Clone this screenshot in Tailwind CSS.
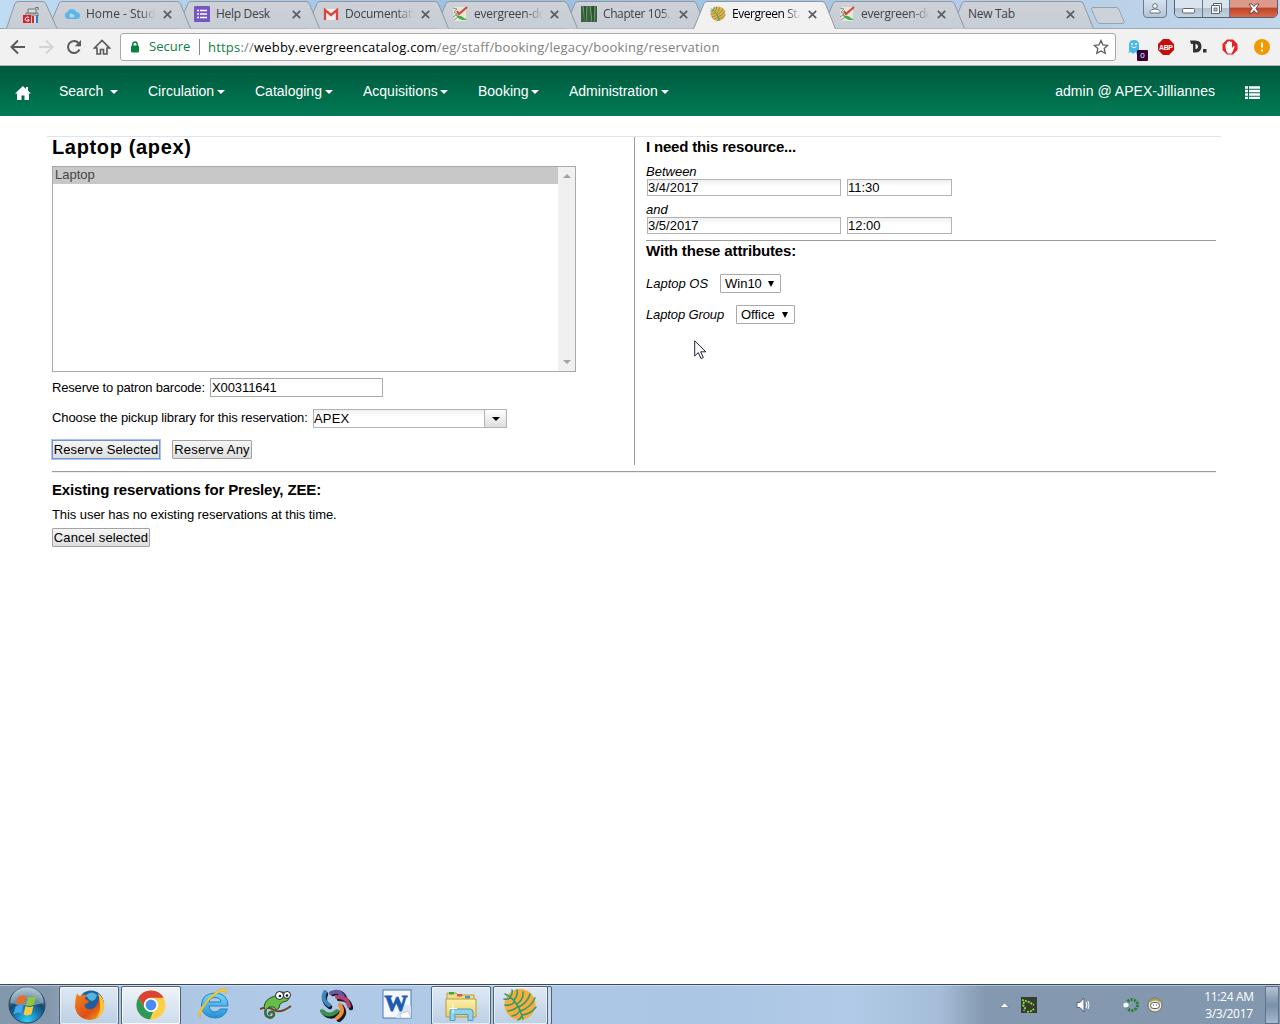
<!DOCTYPE html>
<html lang="en">
<head>
<meta charset="utf-8">
<title>Evergreen Staff Client</title>
<script src="https://cdn.jsdelivr.net/npm/@tailwindcss/browser@4"></script>
</head>
<body class="w-[1280px] h-[1024px] overflow-hidden bg-white flex flex-col font-['Liberation_Sans',Arial,sans-serif] text-[13px] text-black">
<svg width="0" height="0" class="absolute">
  <defs>
    <linearGradient id="tabg" x1="0" y1="0" x2="0" y2="1"><stop offset="0" stop-color="#ced2d7"/><stop offset="1" stop-color="#c7cdd6"/></linearGradient>
    <radialGradient id="orb" cx=".5" cy=".95" r=".9"><stop offset="0" stop-color="#2fd0f5"/><stop offset=".35" stop-color="#1787bd"/><stop offset=".65" stop-color="#15486f"/><stop offset="1" stop-color="#9ab6c8"/></radialGradient>
    <linearGradient id="ie" x1="0" y1="0" x2="0" y2="1"><stop offset="0" stop-color="#7ed6f8"/><stop offset="1" stop-color="#2391d6"/></linearGradient>
    <linearGradient id="fold" x1="0" y1="0" x2="0" y2="1"><stop offset="0" stop-color="#fdf0a8"/><stop offset="1" stop-color="#e9cf6a"/></linearGradient>
    <linearGradient id="fox" x1="0" y1="0" x2="1" y2="1"><stop offset="0" stop-color="#f08a1c"/><stop offset=".6" stop-color="#df4d14"/><stop offset="1" stop-color="#f7b51c"/></linearGradient>
  </defs>
  <symbol id="tab" viewBox="0 0 143 29"><path d="M.5 28.5L11 3.5Q12 1.5 14 1.5H129Q131.500 1.500 132.500 4L142.500 28.500Z" fill="url(#tabg)"/><path d="M.5 28.5L11 3.500Q12 1.500 14 1.500H129Q131.500 1.500 132.500 4L142.500 28.500" fill="none" stroke="#8f98a3"/></symbol>
  <symbol id="x" viewBox="0 0 9 9"><path d="M.8.8l7.400 7.400M8.200.8L.8 8.200" stroke="#5a5e63" stroke-width="1.700"/></symbol>
  <symbol id="leaf" viewBox="0 0 34 34"><circle cx="17" cy="16.500" r="15.500" fill="#f6ad3c"/><g fill="none" stroke="#2b9a72" stroke-width="1.500" stroke-linecap="round"><path d="M2 6Q15 12 20 31"/><path d="M7 9Q10 6 9 2M11 12Q15 8 14 2M14 16Q21 11 20 4M16 19Q25 14 27 6M18 23Q28 19 32 10M19 27Q28 26 33 19"/><path d="M8 9.500Q5 12 1 11M12 14Q8 18 2 17M15 18Q12 22 5 23M17 22Q15 27 9 28M19 27Q18 31 15 32"/></g></symbol>
  <symbol id="log" viewBox="0 0 16 16"><path d="M1 1h13v14H2z" fill="#e8e6dc"/><path d="M1 2l4 1-3 3 3 2-4 3" stroke="#8b9084" fill="none"/><path d="M15 1L7 8l-2-3" stroke="#cc4b38" stroke-width="2.200" fill="none"/><path d="M3 8l4 2 2 0 6 4-5 0-4-2z" fill="#3fae45"/><path d="M2 14l4-3" stroke="#998899"/></symbol>
  <symbol id="person" viewBox="0 0 12 11"><circle cx="6" cy="3" r="2.300" fill="#fff" stroke="#66707c"/><path d="M1 10V8.500Q2 6 6 6t5 2.500V10z" fill="#fff" stroke="#66707c"/></symbol>
</svg>

<!-- window frame with tab strip -->
<header class="relative h-[29px] shrink-0 border-b border-[#a2a5a9] bg-linear-to-r from-[#bfdcf3] via-[#99bde2] via-40% to-[#c3d7ea] font-['Open_Sans','Noto_Sans',sans-serif] text-[12px] leading-[28px] text-[#3f4246]">
  <div class="flex h-[29px] pl-[6px]">
    <div class="relative z-10 w-[52px] h-[29px] shrink-0">
      <svg class="absolute inset-0" width="52" height="29"><path d="M.5 28.500L9 3.500Q10 1.500 12 1.500H37Q39 1.500 40 4L51 28.500" fill="url(#tabg)" stroke="#8f98a3"/></svg>
      <svg class="relative ml-[17px] mt-[7px]" width="17" height="16"><path d="M5 2h8v5H5zM3 6h12v3H3z" fill="#d9d9d9" stroke="#777"/><path d="M12 1l3-1v3" stroke="#666" fill="none"/><rect x="0" y="8" width="8" height="8" fill="#d8202a"/><path d="M6 10.500Q4 9 2.500 11T4 14h2v-1.500H4.500" stroke="#fff" fill="none"/><path d="M9 9h2v7H9z" fill="#b33"/><path d="M11 9h2v7h-2z" fill="#ddd"/><path d="M13 8h2v8h-2z" fill="#277fc0"/></svg>
    </div>
    <div class="relative z-9 -ml-[10px] w-[143px] h-[29px] shrink-0 flex items-center pl-[16px] pb-px">
      <svg class="absolute left-0 top-0" width="143" height="29"><use href="#tab"/></svg>
      <svg class="relative shrink-0" width="16" height="16"><path d="M4 13a3.500 3.500 0 0 1-.5-6.900A4.800 4.800 0 0 1 12.500 6 3.500 3.500 0 0 1 12.500 13z" fill="#62b5e8"/><path d="M5 7h3l1 1h2v4H5z" fill="#a9d8f3" stroke="#4a9fd5" stroke-width=".7"/></svg>
      <span class="relative ml-[6px] w-[69px] h-[28px] whitespace-nowrap mask-r-from-80%">Home - Stud</span>
      <svg class="relative ml-[8px]" width="9" height="9"><use href="#x"/></svg>
    </div>
    <div class="relative z-8 -ml-[14px] w-[143px] h-[29px] shrink-0 flex items-center pl-[17px] pb-px">
      <svg class="absolute left-0 top-0" width="143" height="29"><use href="#tab"/></svg>
      <svg class="relative shrink-0" width="16" height="16"><rect width="16" height="16" rx="1" fill="#7657c2"/><path d="M3 4.500h2M3 8h2M3 11.500h2M6 4.500h7M6 8h7M6 11.500h7" stroke="#fff" stroke-width="1.700"/></svg>
      <span class="relative ml-[6px] w-[69px] h-[28px] whitespace-nowrap tracking-[-.3px]">Help Desk</span>
      <svg class="relative ml-[7px]" width="9" height="9"><use href="#x"/></svg>
    </div>
    <div class="relative z-7 -ml-[14px] w-[143px] h-[29px] shrink-0 flex items-center pl-[17px] pb-px">
      <svg class="absolute left-0 top-0" width="143" height="29"><use href="#tab"/></svg>
      <svg class="relative shrink-0" width="16" height="16"><path d="M1 3h14v11H1z" fill="#eee"/><path d="M2 14V4l6 5 6-5v10" fill="none" stroke="#d9483b" stroke-width="2.300"/></svg>
      <span class="relative ml-[6px] w-[69px] h-[28px] whitespace-nowrap tracking-[-.25px] mask-r-from-75%">Documentati</span>
      <svg class="relative ml-[7px]" width="9" height="9"><use href="#x"/></svg>
    </div>
    <div class="relative z-6 -ml-[14px] w-[143px] h-[29px] shrink-0 flex items-center pl-[17px] pb-px">
      <svg class="absolute left-0 top-0" width="143" height="29"><use href="#tab"/></svg>
      <svg class="relative shrink-0" width="16" height="16"><use href="#log"/></svg>
      <span class="relative ml-[6px] w-[69px] h-[28px] whitespace-nowrap tracking-[-.25px] mask-r-from-75%">evergreen-dc</span>
      <svg class="relative ml-[7px]" width="9" height="9"><use href="#x"/></svg>
    </div>
    <div class="relative z-5 -ml-[14px] w-[143px] h-[29px] shrink-0 flex items-center pl-[17px] pb-px">
      <svg class="absolute left-0 top-0" width="143" height="29"><use href="#tab"/></svg>
      <svg class="relative shrink-0" width="16" height="16"><rect width="16" height="16" fill="#39633f"/><path d="M2 0l2 16M6 0l-1 16M9 0l2 16M14 0l-1 16" stroke="#6f9d70"/><path d="M4 0v16M12 0v16" stroke="#1e4227"/></svg>
      <span class="relative ml-[6px] w-[69px] h-[28px] whitespace-nowrap tracking-[-.4px] mask-r-from-85%">Chapter 105.</span>
      <svg class="relative ml-[7px]" width="9" height="9"><use href="#x"/></svg>
    </div>
    <div class="relative z-20 -ml-[14px] w-[143px] h-[29px] shrink-0 flex items-center pl-[17px] pb-px text-black">
      <svg class="absolute left-0 top-0" width="143" height="29"><path d="M.5 29L11 3.500Q12 1.500 14 1.500H129Q131.500 1.500 132.500 4L142.500 29" fill="#f2f1f2" stroke="#8f98a3"/></svg>
      <svg class="relative shrink-0" width="16" height="16"><use href="#leaf"/></svg>
      <span class="relative ml-[6px] w-[69px] h-[28px] whitespace-nowrap tracking-[-.45px] mask-r-from-75%">Evergreen Sta</span>
      <svg class="relative ml-[7px]" width="9" height="9"><use href="#x"/></svg>
    </div>
    <div class="relative z-3 -ml-[14px] w-[143px] h-[29px] shrink-0 flex items-center pl-[17px] pb-px">
      <svg class="absolute left-0 top-0" width="143" height="29"><use href="#tab"/></svg>
      <svg class="relative shrink-0" width="16" height="16"><use href="#log"/></svg>
      <span class="relative ml-[6px] w-[69px] h-[28px] whitespace-nowrap tracking-[-.25px] mask-r-from-75%">evergreen-dc</span>
      <svg class="relative ml-[7px]" width="9" height="9"><use href="#x"/></svg>
    </div>
    <div class="relative z-2 -ml-[14px] w-[143px] h-[29px] shrink-0 flex items-center pl-[17px] pb-px">
      <svg class="absolute left-0 top-0" width="143" height="29"><use href="#tab"/></svg>
      <span class="relative w-[91px] h-[28px] whitespace-nowrap tracking-[-.3px]">New Tab</span>
      <svg class="relative ml-[7px]" width="9" height="9"><use href="#x"/></svg>
    </div>
    <svg class="-ml-[4px] mt-[6px] shrink-0" width="36" height="19"><path d="M3 1.500H26Q28 1.500 29 3.500L34 15.500Q34.500 17.500 33 17.500H10Q8 17.500 7 15.500L1.500 3.500Q1 1.500 3 1.500Z" fill="#cdd2d9" stroke="#98a2ad"/></svg>
    <div class="ml-[17px] mt-[-1px] w-[24px] h-[19px] shrink-0 rounded-b-[4px] border border-[#6d7b8a] bg-linear-to-b from-[#d5e2ee] to-[#b3c6d9] flex justify-center pt-[3px]"><svg width="12" height="11"><use href="#person"/></svg></div>
    <div class="ml-[7px] mt-[-1px] w-[104px] h-[19px] shrink-0 flex rounded-b-[5px] border border-[#56616e] overflow-hidden">
      <div class="w-[28px] border-r border-[#6b7784] bg-linear-to-b from-[#d9e4ee] from-45% via-[#b1c2d2] via-50% to-[#c3d3e2] flex justify-center"><svg class="mt-[8px]" width="13" height="6"><rect x=".5" y=".5" width="12" height="4.500" rx="1" fill="#fff" stroke="#5b6470"/></svg></div>
      <div class="w-[27px] border-r border-[#6b7784] bg-linear-to-b from-[#d9e4ee] from-45% via-[#b1c2d2] via-50% to-[#c3d3e2] flex justify-center"><svg class="mt-[3px]" width="13" height="12"><path d="M3.500.5h8v8h-8z" fill="#fff" stroke="#5b6470"/><path d="M1.500 2.500h8v8h-8z" fill="#fff" stroke="#5b6470"/><rect x="4" y="5" width="3" height="3" fill="#b1c2d2" stroke="#5b6470" stroke-width=".8"/></svg></div>
      <div class="flex-1 bg-linear-to-b from-[#dc9a8c] from-40% via-[#c14328] via-50% to-[#d8694c] flex justify-center"><svg class="mt-[3px]" width="14" height="11"><path d="M2 1h3l2 2.500L9 1h3L9 5.500 12 10H9L7 7.500 5 10H2L5 5.500z" fill="#fff" stroke="#5b3a3c" stroke-width=".9"/></svg></div>
    </div>
  </div>
</header>

<!-- address bar -->
<div class="h-[37px] shrink-0 bg-[#f2f1f2] border-b border-[#b6b4b6] flex items-center pl-[10px] font-['Open_Sans','Noto_Sans',sans-serif] text-[13px]">
  <svg width="16" height="16" viewBox="0 0 16 16"><path d="M15 8H2M8 1.500L1.500 8 8 14.500" fill="none" stroke="#5a5a5a" stroke-width="2"/></svg>
  <svg class="ml-[12px]" width="16" height="16" viewBox="0 0 16 16"><path d="M1 8H14M8 1.500L14.500 8 8 14.500" fill="none" stroke="#d5d4d5" stroke-width="2"/></svg>
  <svg class="ml-[12px]" width="16" height="16" viewBox="0 0 16 16"><path d="M13.500 10.500A6 6 0 1 1 12.500 4" fill="none" stroke="#5a5a5a" stroke-width="2"/><path d="M15 1v6.200H8.800z" fill="#5a5a5a"/></svg>
  <svg class="ml-[11px]" width="18" height="16" viewBox="0 0 18 16"><path d="M1.500 9L9 1.500 16.500 9H14v6h-3.500v-4.500h-3V15H4V9z" fill="none" stroke="#5a5a5a" stroke-width="1.600"/></svg>
  <div class="ml-[9px] w-[996px] h-[28px] rounded-[3px] border border-[#a9a8a9] bg-white flex items-center pl-[9px]">
    <svg width="10" height="12"><rect x="1" y="4.500" width="8" height="7" rx="1" fill="#0b8043"/><path d="M2.800 5V3.200a2.200 2.200 0 0 1 4.400 0V5" fill="none" stroke="#0b8043" stroke-width="1.400"/></svg>
    <span class="ml-[9px] w-[41px] text-[#0b8043] whitespace-nowrap">Secure</span>
    <span class="ml-[9px] w-px h-[16px] bg-[#8a8a8a]"></span>
    <span class="ml-[8px] w-[883px] pt-px whitespace-nowrap tracking-[.205px] text-[#808080]"><span class="text-[#0b8043]">https</span>://<span class="text-black">webby.evergreencatalog.com</span>/eg/staff/booking/legacy/booking/reservation</span>
    <svg class="ml-[2px] shrink-0" width="16" height="16" viewBox="0 0 16 16"><path d="M8 1.500l2 4.400 4.700.5-3.500 3.200 1 4.700L8 12l-4.200 2.300 1-4.700L1.300 6.400 6 5.900z" fill="none" stroke="#5a5a5a" stroke-width="1.300"/></svg>
  </div>
  <div class="relative ml-[11px] w-[31px] h-[28px]">
    <svg class="mt-[6px]" width="14" height="16"><path d="M2 6Q2 1 7 1t5 5v7l1 1-3 1-2-2-2 2-2-2-3 1q2-2 1-4z" fill="#48b8e8"/><circle cx="5" cy="5" r="1" fill="#fff"/><circle cx="9" cy="5" r="1" fill="#fff"/><path d="M4.500 7.500Q7 10 9.500 7.500" fill="none" stroke="#fff"/></svg>
    <span class="absolute left-[10px] top-[17px] w-[11px] h-[11px] rounded-[1px] bg-[#330033] text-white text-[8px] leading-[11px] text-center font-['Liberation_Sans']">0</span>
  </div>
  <div class="w-[32px]"><svg width="16" height="16"><path d="M5 0h6l5 5v6l-5 5H5L0 11V5z" fill="#c70d0d"/><text x="8" y="10.500" text-anchor="middle" font-size="7" font-weight="700" font-family="Liberation Sans" fill="#fff" textLength="14">ABP</text></svg></div>
  <div class="w-[32px]"><svg width="17" height="16"><path d="M0 1.500h5q6.500 0 6.500 6t-6.500 6H3V5H1z" fill="#333"/><path d="M5.500 5v5q2.500 0 2.500-2.500T5.500 5" fill="#f2f1f2"/><rect x="13" y="10" width="3.500" height="3.500" fill="#333"/></svg></div>
  <div class="w-[32px]"><svg width="16" height="16"><path d="M5 .5h6L15.500 5v6L11 15.500H5L.5 11V5z" fill="#e52325"/><path d="M3.500 8V5q.8-1 1.500 0V3q.8-1 1.600 0v-.5q.9-1 1.700 0V3q.9-.8 1.600 0V9l1.800-2q1.300 0 .8 1L10.500 13l-1 1.500H6Q3.500 12 3.500 8z" fill="#fff"/></svg></div>
  <svg width="16" height="16"><circle cx="8" cy="8" r="8" fill="#f29900"/><path d="M8 3.500v5M8 10.500v2" stroke="#fff" stroke-width="2"/></svg>
</div>

<!-- staff client navigation -->
<nav class="h-[50px] shrink-0 bg-linear-to-b from-[#00593d] to-[#007a54] flex items-center pl-[15px] text-[14px] text-white">
  <svg class="mt-[3px]" width="16" height="14"><path d="M8 0L0 7.500h2V14h4.500V9.500h3V14H14V7.500h2L13 4.700V1h-2v2z" fill="#fff"/></svg>
  <span class="ml-[28px] w-[89px] flex items-center">Search<svg class="ml-[7px] mt-px" width="8" height="4"><path d="M0 0h8L4 4z" fill="#fff"/></svg></span>
  <span class="w-[107px] flex items-center">Circulation<svg class="ml-[3px] mt-px" width="8" height="4"><path d="M0 0h8L4 4z" fill="#fff"/></svg></span>
  <span class="w-[108px] flex items-center">Cataloging<svg class="ml-[3px] mt-px" width="8" height="4"><path d="M0 0h8L4 4z" fill="#fff"/></svg></span>
  <span class="w-[115px] flex items-center">Acquisitions<svg class="ml-[2px] mt-px" width="8" height="4"><path d="M0 0h8L4 4z" fill="#fff"/></svg></span>
  <span class="w-[91px] flex items-center">Booking<svg class="ml-[2px] mt-px" width="8" height="4"><path d="M0 0h8L4 4z" fill="#fff"/></svg></span>
  <span class="flex items-center">Administration<svg class="ml-[3px] mt-px" width="8" height="4"><path d="M0 0h8L4 4z" fill="#fff"/></svg></span>
  <span class="ml-auto whitespace-nowrap tracking-[.04px]">admin @ APEX-Jilliannes</span>
  <svg class="ml-[30px] mr-[20px] mt-[3px]" width="15" height="13"><path d="M0 1.500h3M0 5h3M0 8.500h3M0 12h3M4 1.500h11M4 5h11M4 8.500h11M4 12h11" stroke="#fff" stroke-width="2.500"/></svg>
</nav>

<!-- booking page -->
<main class="relative flex-1 pt-[20px] pl-[47px]">
  <div class="w-[1174px] border-t border-[#dbe5f1] pl-[5px]">
    <div class="flex h-[328px]">
      <section class="w-[583px] shrink-0 border-r border-[#9c9c9c]">
        <h1 class="h-[29px] text-[20px] leading-[20px] font-bold whitespace-nowrap tracking-[.65px]">Laptop (apex)</h1>
        <div class="w-[524px] h-[206px] border border-[#a9a9a9] flex">
          <div class="flex-1"><div class="h-[17px] bg-[#c8c8c8] pl-[2px] leading-[16px] text-[#444]">Laptop</div></div>
          <div class="w-[17px] bg-[#f0f0f0] flex flex-col items-center justify-between py-[7px]">
            <svg width="8" height="4"><path d="M0 4L4 0l4 4z" fill="#a3a3a3"/></svg>
            <svg width="8" height="4"><path d="M0 0h8L4 4z" fill="#a3a3a3"/></svg>
          </div>
        </div>
        <div class="mt-[6px] flex h-[19px] items-center">
          <span class="w-[158px] whitespace-nowrap tracking-[-.18px]">Reserve to patron barcode:</span>
          <div class="w-[173px] h-[19px] border border-[#a9a9a9] pl-px leading-[17px] tracking-[-.1px]">X00311641</div>
        </div>
        <div class="mt-[12px] flex h-[19px]">
          <span class="w-[261px] leading-[18px] whitespace-nowrap tracking-[-.11px]">Choose the pickup library for this reservation:</span>
          <div class="w-[194px] h-[19px] border border-[#b3b3b3] flex leading-[18px] bg-linear-to-b from-[#eeeeee] to-white to-40%">
            <span class="flex-1 tracking-[.2px]">APEX</span>
            <span class="w-[22px] border-l border-[#b3b3b3] bg-linear-to-b from-white to-[#dddddd] flex items-center justify-center"><svg class="mt-px" width="8" height="4"><path d="M0 0h8L4 4z"/></svg></span>
          </div>
        </div>
        <div class="mt-[12px] flex gap-[12px]">
          <button class="w-[108px] h-[19px] border border-[#6d96d8] outline outline-[#a8c3ee] bg-linear-to-b from-[#f6f6f6] to-[#dddddd] leading-[17px] whitespace-nowrap tracking-[.12px]">Reserve Selected</button>
          <button class="w-[80px] h-[19px] border border-[#a3a3a3] rounded-[1px] bg-linear-to-b from-[#f6f6f6] to-[#dddddd] leading-[17px] whitespace-nowrap tracking-[.15px]">Reserve Any</button>
        </div>
      </section>
      <section class="pl-[11px] w-[581px]">
        <h2 class="h-[26px] text-[15px] leading-[20px] font-bold tracking-[-.18px]">I need this resource...</h2>
        <p class="h-[16px] leading-[17px] italic">Between</p>
        <div class="flex gap-[6px] pl-px leading-[15px]">
          <div class="w-[194px] h-[17px] border border-[#b3b3b3] bg-linear-to-b from-[#eeeeee] to-white to-40%">3/4/2017</div>
          <div class="w-[105px] h-[17px] border border-[#b3b3b3] bg-linear-to-b from-[#eeeeee] to-white to-40%">11:30</div>
        </div>
        <p class="mt-[5px] h-[16px] leading-[17px] italic">and</p>
        <div class="flex gap-[6px] pl-px leading-[15px]">
          <div class="w-[194px] h-[17px] border border-[#b3b3b3] bg-linear-to-b from-[#eeeeee] to-white to-40%">3/5/2017</div>
          <div class="w-[105px] h-[17px] border border-[#b3b3b3] bg-linear-to-b from-[#eeeeee] to-white to-40%">12:00</div>
        </div>
        <div class="mt-[6px] border-t border-[#9c9c9c]"></div>
        <h2 class="h-[33px] text-[15px] leading-[20px] font-bold tracking-[-.14px]">With these attributes:</h2>
        <div class="flex h-[19px] leading-[19px]"><span class="w-[74px] italic whitespace-nowrap">Laptop OS</span><div class="w-[61px] border border-[#a9a9a9] rounded-[1px] pl-[4px] leading-[17px] flex items-center">Win10<svg class="ml-[6px]" width="6" height="6"><path d="M0 0h6L3 6z"/></svg></div></div>
        <div class="mt-[12px] flex h-[19px] leading-[19px]"><span class="w-[90px] italic whitespace-nowrap tracking-[-.12px]">Laptop Group</span><div class="w-[59px] border border-[#a9a9a9] rounded-[1px] pl-[4px] leading-[17px] flex items-center">Office<svg class="ml-[7px]" width="6" height="6"><path d="M0 0h6L3 6z"/></svg></div></div>
      </section>
    </div>
    <div class="mt-[6px] w-[1164px] h-[2px] border-t border-[#9c9c9c] bg-[#eeeeee]"></div>
    <h2 class="mt-[7px] h-[25px] text-[15px] leading-[20px] font-bold tracking-[-.15px]">Existing reservations for Presley, ZEE:</h2>
    <p class="h-[23px] leading-[20px] tracking-[-.07px]">This user has no existing reservations at this time.</p>
    <button class="w-[98px] h-[19px] border border-[#a3a3a3] rounded-[1px] bg-linear-to-b from-[#f6f6f6] to-[#dddddd] leading-[17px] whitespace-nowrap block tracking-[.12px]">Cancel selected</button>
  </div>
  <!-- mouse pointer -->
  <svg class="absolute left-[694px] top-[224px]" width="13" height="20"><path d="M.7.800V16l3.600-3.400L7 18.500l2.300-1-2.600-5.700H11.800z" fill="#fff" stroke="#22223a"/></svg>
</main>

<!-- taskbar -->
<footer class="h-[40px] shrink-0 border-t border-[#3c4a58] bg-[linear-gradient(90deg,#8498ad_0px,#8498ad_50px,#a9c4e2_110px,#b1cae7_300px,#aac6e4_700px,#b1cae7_850px,#a5bdd8_940px,#8499b0_985px,#8398af_1280px)] text-white">
  <div class="flex items-center h-[39px] border-t border-white/40">
    <svg class="ml-[8px]" width="38" height="38"><circle cx="19" cy="19" r="18" fill="url(#orb)" stroke="#2a4258"/><path d="M2.500 17A16.500 16.500 0 0 1 35.500 17Q19 22 2.500 17" fill="#c8dbe5" opacity=".45"/><path d="M10 11q4-3 8-1l-2 8q-4-2-8 1z" fill="#ee6a2a"/><path d="M20 10.500q4 2 8-.5l-2 8.500q-4 2.500-8 .5z" fill="#8fc73e"/><path d="M7.500 20.500q4-3 8-1l-2 8q-4-2-8 1z" fill="#48a4e6"/><path d="M17.500 20q4 2 8 0l-2 8q-4 2.500-8 .5z" fill="#fbca3c"/></svg>
    <div class="ml-[13px] w-[60px] h-[39px] rounded-[2px] border border-[#4f6276] bg-linear-to-b from-[#dfe9f4] to-[#bccfe4] shadow-[inset_0_0_0_1px_rgba(255,255,255,.6)] flex items-center justify-center">
      <svg width="31" height="31"><circle cx="17" cy="13" r="12.500" fill="#1e5f9f"/><path d="M12 5q6-5 11 0-1 5-5 6-4-1-6-6z" fill="#55b4dd"/><path d="M3 3q1 3 3 3 3-2 7-1-2 2-2 4l4 2q-1 3-4 3-1 4 3 5 5 1 8-3 5-6 2-13 7 6 6 14-2 12-14 13-13-1-15-13Q1 9 3 3z" fill="url(#fox)"/><path d="M24 3q7 7 6 14-1 8-8 11 5-6 4-13 0-6-2-12z" fill="#fbc62d"/></svg>
    </div>
    <div class="ml-[2px] w-[60px] h-[39px] rounded-[2px] border border-[#4f6276] bg-linear-to-b from-[#eef3f9] to-[#ccdced] shadow-[inset_0_0_0_1px_rgba(255,255,255,.8)] flex items-center justify-center">
      <svg width="30" height="30" viewBox="0 0 30 30"><circle cx="15" cy="15" r="14.500" fill="#fdcf47"/><path d="M2.400 7.700A14.500 14.500 0 0 1 27.600 7.700H15A7 7 0 0 0 9 18.500z" fill="#d94435"/><path d="M2.400 7.700L9 18.500Q12 22 17 21.800L14 29.500A14.500 14.500 0 0 1 2.400 7.700z" fill="#2c9a57"/><circle cx="15" cy="15" r="7" fill="#fff"/><circle cx="15" cy="15" r="5.400" fill="#4a8af4"/></svg>
    </div>
    <svg class="ml-[16px] -mt-[2px]" width="34" height="34"><path d="M31 19H12q1 6 6 6 3.500 0 5-3h7.500q-3 9-12.500 9Q4.500 30 4.500 18 5 6.500 18 6q13 .5 13 13zM12 15h12q-1-4.500-6-4.500T12 15z" fill="url(#ie)" stroke="#1f83c8"/><path d="M4 31Q-2 28 7 17 15 6 24 2q7-2 5 5-1-4-6-2Q15 9 9 17 1 29 4 31z" fill="#f9ce2e" stroke="#d8a71d" stroke-width=".5"/></svg>
    <svg class="ml-[28px]" width="33" height="32"><path d="M1 20q8-3 14 1t17-4" stroke="#73442b" stroke-width="2" fill="none"/><path d="M5 19Q5 10 16 7q2-5 6-4 5-1 8 4 1 5-6 6-4 1-4 6l-3 2-2-3-5 0-3 3z" fill="#67bd48" stroke="#24521d"/><path d="M7 20q-2 6 2 8t6-2q0-4-3-3t-1 3" fill="none" stroke="#3d6a37" stroke-width="2.500"/><circle cx="20.500" cy="6.500" r="4" fill="#fff" stroke="#222"/><circle cx="28" cy="6" r="3.500" fill="#fff" stroke="#222"/><circle cx="21" cy="7" r="1.300" fill="#111"/><circle cx="28" cy="6.500" r="1.300" fill="#111"/></svg>
    <svg class="ml-[27px]" width="34" height="34"><g fill="none" stroke-linecap="round"><g stroke="#171b22" stroke-width="4.500"><path d="M14 6q8-4 12 4"/><path d="M20 11q10-1 12 9"/><path d="M23 19q5 7-3 13"/><path d="M20 25q-8 7-15 0"/><path d="M11 19Q3 14 7 6"/></g><g stroke-width="4"><path d="M12 5q8-4 12 4" stroke="#6b58a5"/><path d="M18 9q10-1 12 9" stroke="#b04372"/><path d="M21 17q5 7-3 13" stroke="#f28c38"/><path d="M18 23q-8 7-15 0" stroke="#3b9150"/><path d="M10 17Q2 12 6 4" stroke="#3c86bd"/></g></g></svg>
    <svg class="ml-[29px] -mt-[2px]" width="31" height="31"><rect x="1" y="1" width="28" height="28" fill="#f5f8fc" stroke="#4b79b8"/><path d="M20 14l9 3v12H14z" fill="#dbe6f2"/><text x="14" y="22" text-anchor="middle" font-size="24" font-weight="700" font-family="Liberation Serif" fill="#1e5aad" stroke="#1e5aad" textLength="23" lengthAdjust="spacingAndGlyphs">W</text><path d="M18 25l8-3 3 7H19z" fill="#fff" stroke="#9eb3cc" stroke-width=".6"/></svg>
    <div class="ml-[18px] w-[60px] h-[39px] rounded-[2px] border border-[#4f6276] bg-linear-to-b from-[#dfe9f4] to-[#bccfe4] shadow-[inset_0_0_0_1px_rgba(255,255,255,.6)] flex items-center justify-center">
      <svg width="34" height="31"><path d="M3 3h9l2 2h16v20H3z" fill="#f0dc86" stroke="#b69b45"/><path d="M5 2h5v2.500H5z" fill="#3da63e"/><path d="M13 4h5v2.500h-5z" fill="#d85742"/><path d="M21 6h5v2.500h-5z" fill="#3c99d4"/><path d="M2 9h30v18H2z" fill="url(#fold)" stroke="#b69b45"/><path d="M6 30.500V22q0-3 3-3h17q3 0 3 3v8.500h-5v-6H11v6z" fill="#8fd0ea" stroke="#4a9cc0"/><path d="M9 14v9M5 18.500h8" stroke="#fff"/></svg>
    </div>
    <div class="ml-[2px] w-[55px] h-[39px] rounded-[2px] border border-[#4f6276] bg-linear-to-b from-[#dfe9f4] to-[#bccfe4] shadow-[inset_0_0_0_1px_rgba(255,255,255,.6)] flex items-center justify-center">
      <svg class="-ml-[2px]" width="34" height="34"><use href="#leaf"/></svg>
    </div>
    <div class="-ml-px w-[5px] h-[39px] rounded-r-[2px] border border-[#4f6276] bg-[#cddced]"></div>
    <svg class="ml-auto" width="9" height="6"><path d="M0 5.500L4.500 1 9 5.500z" fill="#fff" stroke="#5a6878" stroke-width=".6"/></svg>
    <svg class="ml-[12px]" width="16" height="16"><rect width="16" height="16" fill="#383a36"/><path d="M1 3l4 1 3 1 5 3M3 5L2 8l2 3-1 3M6 15l4-1 3-2" stroke="#7bf01d" stroke-width="1.800" stroke-dasharray="2 1" fill="none"/></svg>
    <svg class="ml-[39px]" width="15" height="16"><path d="M1 5.500h3L8 1v14l-4-4.500H1z" fill="#fff" stroke="#566474"/><path d="M10 5q2 3 0 6M12 4q2 4 0 8" stroke="#fff" fill="none"/></svg>
    <svg class="ml-[32px]" width="16" height="16"><circle cx="9" cy="8" r="5.500" fill="none" stroke="#2f7a3b" stroke-width="3" stroke-dasharray="2.200 1.200"/><circle cx="3" cy="8" r="2.600" fill="#f4f6f7"/></svg>
    <svg class="ml-[8px]" width="16" height="16"><circle cx="8" cy="8" r="7" fill="#e9e7d8" stroke="#6c6b56"/><path d="M2 5q6-5 12 0" stroke="#aa9a4c" stroke-width="2" fill="none"/><rect x="3.500" y="5.500" width="9" height="6" rx="3" fill="#fff" stroke="#56584f"/><path d="M6 8h1M9 8h1" stroke="#333"/></svg>
    <div class="ml-[33px] w-[66px] text-center font-['Open_Sans','Noto_Sans',sans-serif] text-[12px] leading-[17px] tracking-[-.3px] -mt-px"><div class="whitespace-nowrap">11:24 AM</div><div>3/3/2017</div></div>
    <div class="ml-[3px] mr-px w-[14px] h-[38px] border border-[#5f7388] bg-linear-to-b from-[#b3c3d4] via-[#7890a8] to-[#a5bace]"></div>
  </div>
</footer>
</body>
</html>
